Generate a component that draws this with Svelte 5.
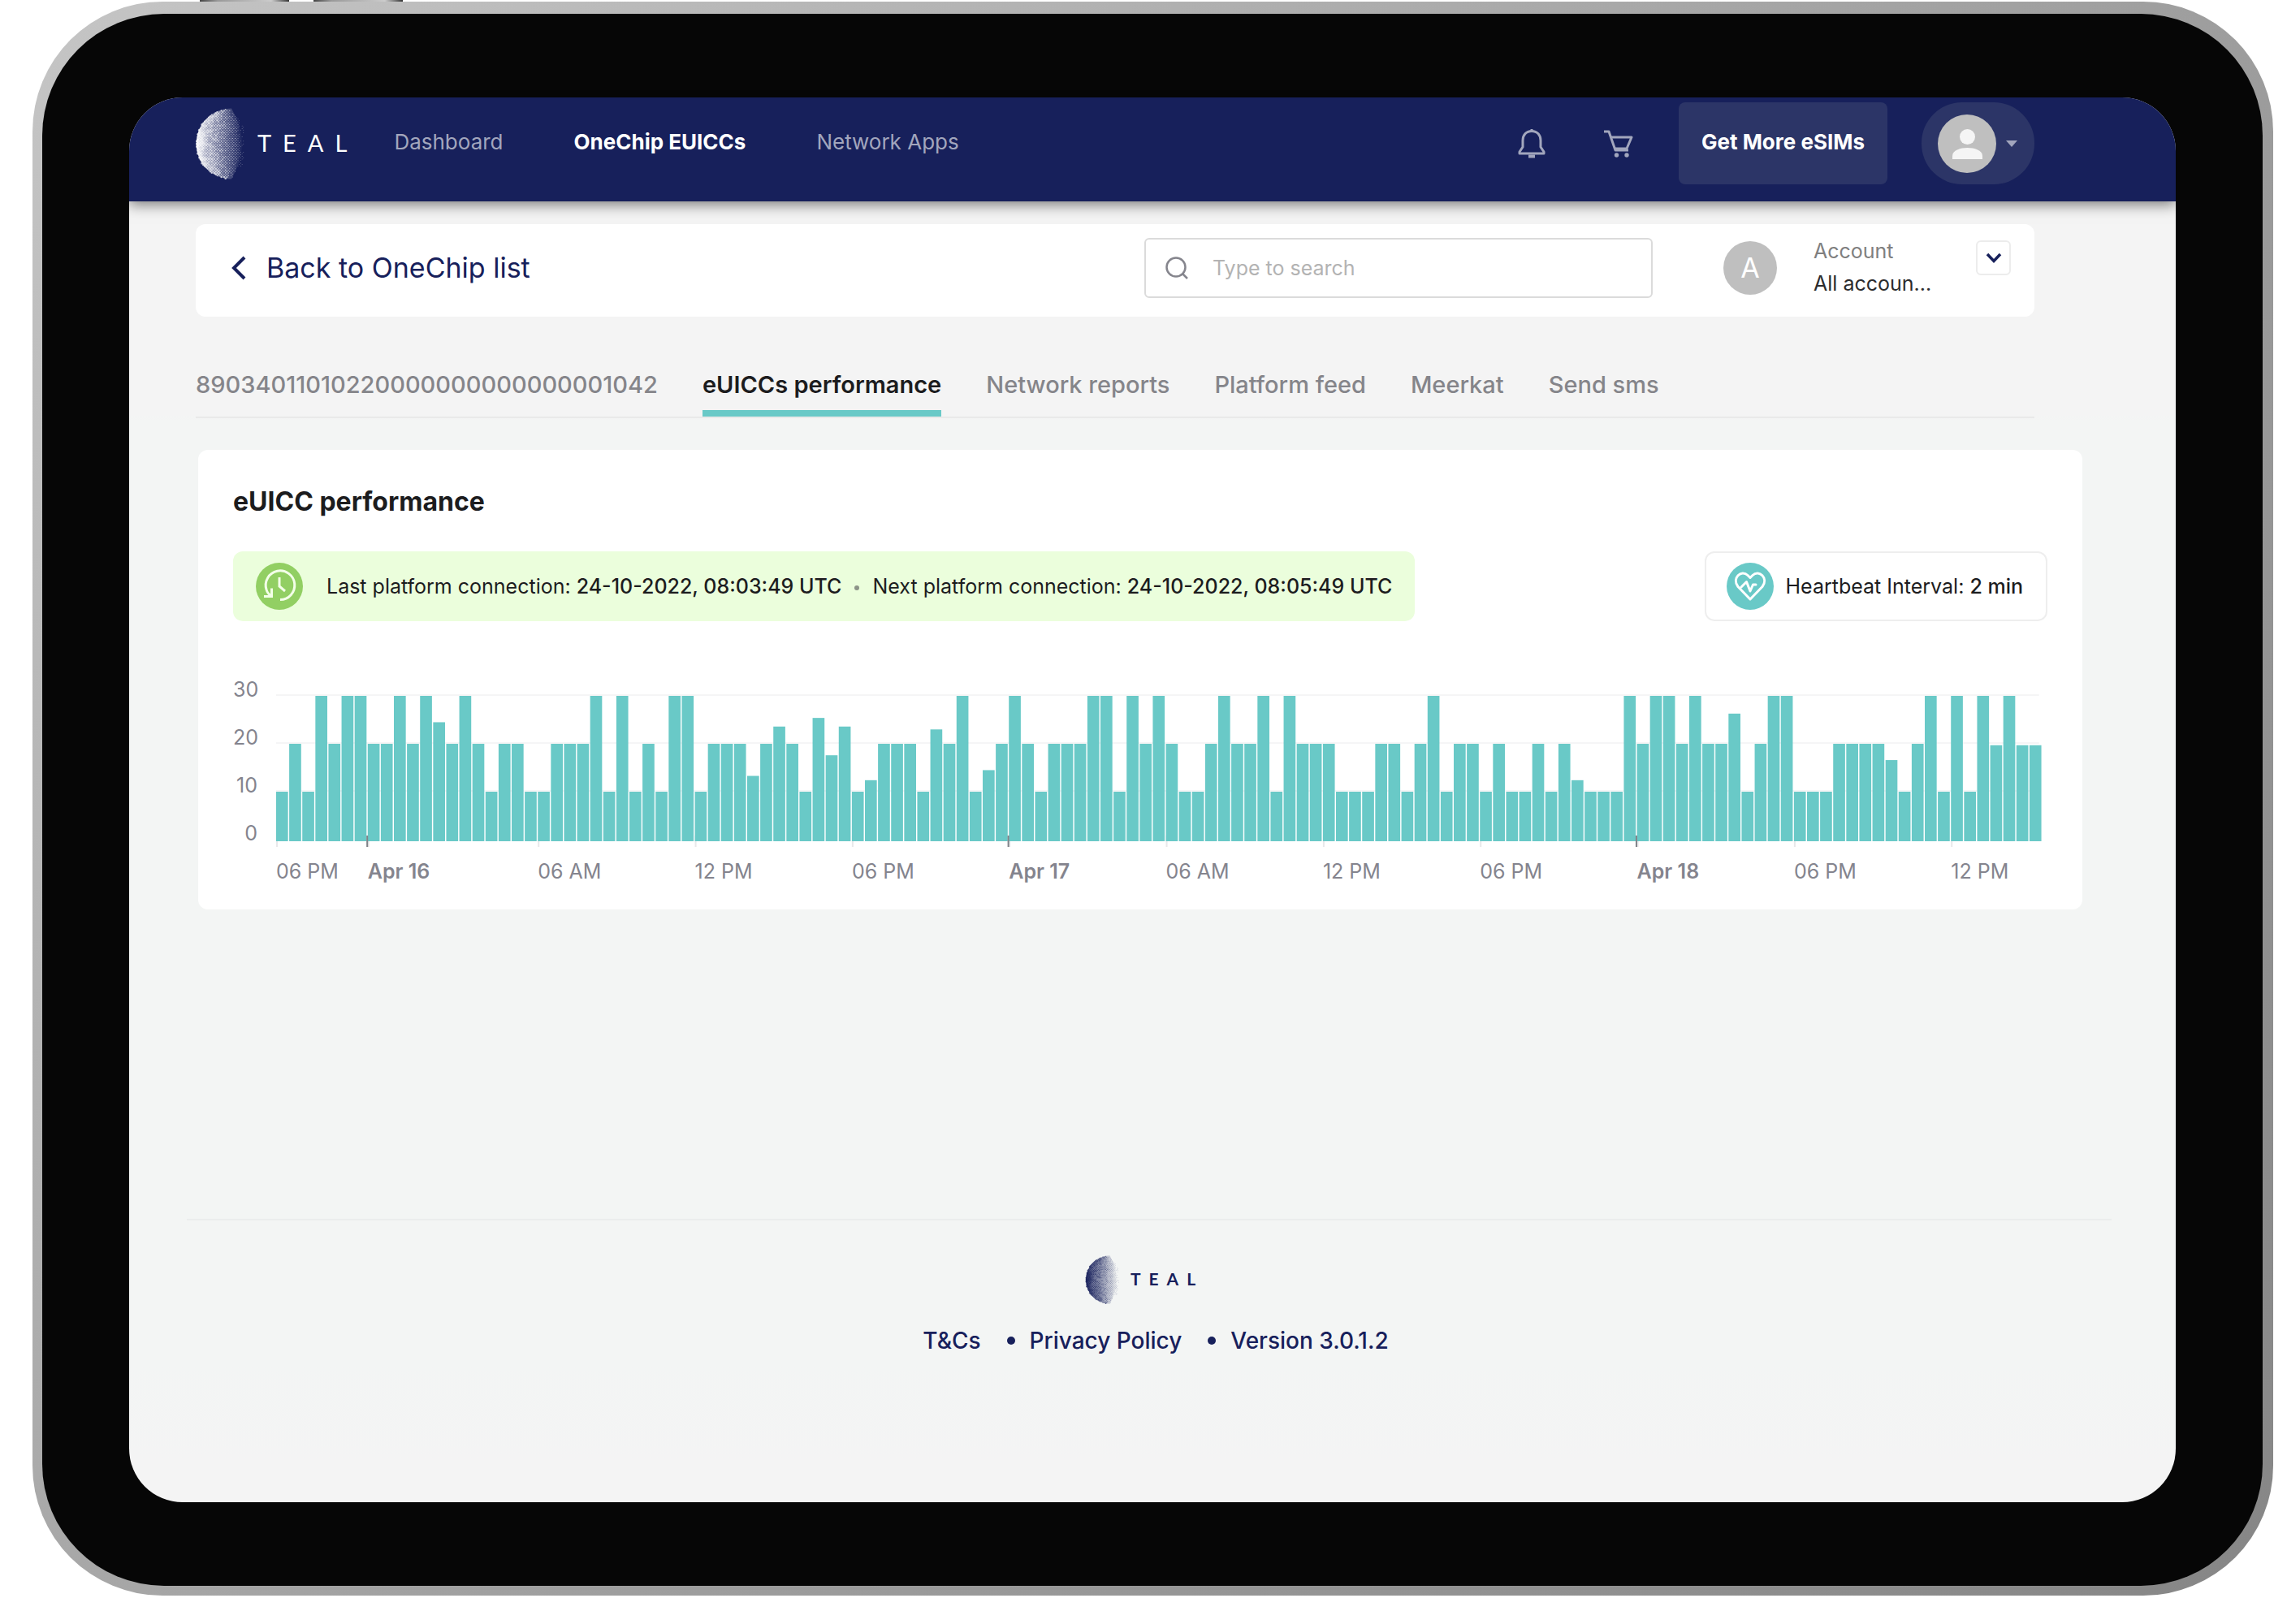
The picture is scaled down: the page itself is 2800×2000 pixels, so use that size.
<script lang="ts">
    const navLinks = [
        { label: "Dashboard", active: false },
        { label: "OneChip EUICCs", active: true },
        { label: "Network Apps", active: false },
    ];

    const tabs = [
        "89034011010220000000000000001042",
        "eUICCs performance",
        "Network reports",
        "Platform feed",
        "Meerkat",
        "Send sms",
    ];
    let activeTab = "eUICCs performance";

    let search = "";

    // Chart data
    const bars = [
        10, 20, 10, 30, 20, 30, 30, 20, 20, 30, 20, 30, 24.5, 20, 30, 20, 10,
        20, 20, 10, 10, 20, 20, 20, 30, 10, 30, 10, 20, 10, 30, 30, 10, 20, 20,
        20, 13.3, 20, 23.6, 20, 10, 25.4, 17.6, 23.6, 10, 12.4, 20, 20, 20, 10,
        23, 20, 30, 10, 14.5, 20, 30, 20, 10, 20, 20, 20, 30, 30, 10, 30, 20,
        30, 20, 10, 10, 20, 30, 20, 20, 30, 10, 30, 20, 20, 20, 10, 10, 10, 20,
        20, 10, 20, 30, 10, 20, 20, 10, 20, 10, 10, 20, 10, 20, 12.4, 10, 10,
        10, 30, 20, 30, 30, 20, 30, 20, 20, 26.3, 10, 20, 30, 30, 10, 10, 10,
        20, 20, 20, 20, 16.6, 10, 20, 30, 10, 30, 10, 30, 19.7, 30, 19.7, 19.7,
    ];

    const ticks = [
        { at: 0, label: "06 PM" },
        { at: 7, label: "Apr 16", day: true },
        { at: 20, label: "06 AM" },
        { at: 32, label: "12 PM" },
        { at: 44, label: "06 PM" },
        { at: 56, label: "Apr 17", day: true },
        { at: 68, label: "06 AM" },
        { at: 80, label: "12 PM" },
        { at: 92, label: "06 PM" },
        { at: 104, label: "Apr 18", day: true },
        { at: 116, label: "06 PM" },
        { at: 128, label: "12 PM" },
    ];

    const yLabels = [30, 20, 10, 0];
    const base = 216;

    function barHeight(value: number) {
        return 2 + value * 5.9;
    }

    function pct(index: number) {
        return (index / bars.length) * 100 + "%";
    }

    // Halftone globe of the logo: dots shrink away from the left rim
    function makeDots() {
        const dots: { x: number; y: number; r: number }[] = [];
        const step = 1.7;
        let seed = 7;
        for (let row = 0; row < 53; row++) {
            for (let col = 0; col < 19; col++) {
                seed = (seed * 1103515245 + 12345) % 2147483648;
                const noise = seed / 2147483648;
                const x = 1 + col * step * 2 + (row % 2) * step;
                const y = row * step;
                const dx = x - 44;
                const dy = y - 44;
                if (dx * dx + dy * dy > 43.5 * 43.5) continue;
                const rim = 44 - Math.sqrt(43.5 * 43.5 - dy * dy);
                const edge = 62 - Math.pow(Math.abs(dy) / 43.5, 3) * 17;
                if (x > edge - noise * 10) continue;
                const t = (x - rim) / (edge - rim);
                const r = 1.3 * Math.pow(1 - t, 1.1) * (0.4 + noise * 0.7) + 0.35;
                dots.push({ x, y, r: Math.round(r * 100) / 100 });
            }
        }
        return dots;
    }
    const dots = makeDots();
</script>

{#snippet brand(small)}
    <a class="brand" class:small href="#home" aria-label="Teal home">
        <svg class="globe" viewBox="0 0 60 88" fill="currentColor" aria-hidden="true">
            <mask id="globe-fade">
                <linearGradient id="globe-ramp">
                    <stop offset="0" stop-color="#fff" />
                    <stop offset="0.25" stop-color="#888" />
                    <stop offset="0.7" stop-color="#333" />
                    <stop offset="1" stop-color="#000" />
                </linearGradient>
                <rect width="60" height="88" fill="url(#globe-ramp)" />
            </mask>
            <path
                d="M44 .5A43.5 43.5 0 0 0 44 87.500C50 76 57 62 57 44C57 26 50 12 44 .5Z"
                mask="url(#globe-fade)"
            />
            <g opacity="0.7">
                {#each dots as dot}
                    <circle cx={dot.x} cy={dot.y} r={dot.r} />
                {/each}
            </g>
        </svg>
        <span class="wordmark">TEAL</span>
    </a>
{/snippet}

<div class="stage">
    <div class="side-button first"></div>
    <div class="side-button second"></div>
    <div class="tablet">
        <div class="bezel">
            <div class="screen">
                <header class="topbar">
                    {@render brand(false)}
                    <nav class="main-nav">
                        {#each navLinks as link}
                            <a href="#nav" class:active={link.active}>{link.label}</a>
                        {/each}
                    </nav>
                    <div class="icons">
                        <button class="icon-btn" aria-label="Notifications">
                            <svg width="36" height="38" viewBox="0 0 36 38" fill="none" stroke="currentColor" stroke-width="3" stroke-linejoin="round">
                                <path d="M18 3.500C11 3.500 7 8.500 7 15V23L3 29V31H33V29L29 23V15C29 8.500 25 3.500 18 3.500Z" />
                                <path d="M18 1V4" />
                                <path d="M14 34.500H22" stroke-width="4" />
                            </svg>
                        </button>
                        <button class="icon-btn" aria-label="Cart">
                            <svg width="36" height="36" viewBox="0 0 36 36" fill="none" stroke="currentColor" stroke-width="3" stroke-linejoin="round">
                                <path d="M0 3H6L14 26H30" />
                                <path d="M8 10H34L28 24H13" />
                                <circle cx="15.500" cy="32" r="2.700" fill="currentColor" stroke="none" />
                                <circle cx="28" cy="32" r="2.700" fill="currentColor" stroke="none" />
                            </svg>
                        </button>
                    </div>
                    <button class="cta">Get More eSIMs</button>
                    <button class="profile" aria-label="Profile menu">
                        <svg width="72" height="72" viewBox="0 0 72 72">
                            <circle cx="36" cy="36" r="36" fill="#bfbfbf" />
                            <circle cx="36.500" cy="27.500" r="9.500" fill="#f5f5f5" />
                            <path d="M18 55V51C18 44 28 41 36.500 41S55 44 55 51V55Z" fill="#f5f5f5" />
                        </svg>
                        <svg width="14" height="8" viewBox="0 0 14 8">
                            <path d="M0 0H14L7 8Z" fill="#a2a6bd" />
                        </svg>
                    </button>
                </header>

                <main>
                    <div class="toolbar">
                        <a class="back" href="#list">
                            <svg width="18" height="30" viewBox="0 0 18 30" fill="none" stroke="currentColor" stroke-width="4">
                                <path d="M16 2L3 15L16 28" />
                            </svg>
                            Back to OneChip list
                        </a>
                        <div class="search">
                            <svg width="28" height="28" viewBox="0 0 28 28" fill="none" stroke="#85858d" stroke-width="2.500">
                                <circle cx="13" cy="13" r="11.500" />
                                <path d="M21 21L27 27" />
                            </svg>
                            <input
                                type="text"
                                aria-label="Search"
                                placeholder="Type to search"
                                bind:value={search}
                            />
                        </div>
                        <div class="account">
                            <span class="initial">A</span>
                            <div class="account-text">
                                <label for="account">Account</label>
                                <select id="account">
                                    <option>All accoun...</option>
                                </select>
                            </div>
                            <button class="expand" aria-label="Open account list">
                                <svg width="20" height="14" viewBox="0 0 20 14" fill="none" stroke="#17205b" stroke-width="3.500">
                                    <path d="M2 2L10 10.500L18 2" />
                                </svg>
                            </button>
                        </div>
                    </div>

                    <nav class="tabs">
                        {#each tabs as tab}
                            <a
                                href="#tab"
                                class:active={tab === activeTab}
                                on:click|preventDefault={() => (activeTab = tab)}
                            >{tab}</a>
                        {/each}
                    </nav>

                    <section class="panel">
                        <h1>eUICC performance</h1>
                        <div class="status-row">
                            <div class="connection">
                                <svg width="58" height="58" viewBox="0 0 58 58" fill="none" stroke="#f3ffe8" stroke-width="3">
                                    <circle cx="29" cy="29" r="29" fill="#92cf63" stroke="none" />
                                    <path d="M30 45.500A17.800 17.800 0 1 0 13 33C14 37 16 39 19 41" />
                                    <path d="M10 41.500H19.500V31.500" />
                                    <path d="M29 18V29L36 35" />
                                </svg>
                                <p>
                                    Last platform connection: <b>24-10-2022, 08:03:49 UTC</b>
                                    <span class="dot"></span>
                                    Next platform connection: <b>24-10-2022, 08:05:49 UTC</b>
                                </p>
                            </div>
                            <div class="heartbeat">
                                <svg width="58" height="58" viewBox="0 0 58 58" fill="none" stroke="#fff" stroke-width="3" stroke-linejoin="round" stroke-linecap="round">
                                    <circle cx="29" cy="29" r="29" fill="#69c9c7" stroke="none" />
                                    <path d="M29 45L14 29.500C6 19 18 8 26 15.500L29 18.500L32 15.500C40 8 52 19 44 29.500Z" />
                                    <path d="M18 30L24.500 23.500L29 35L32.500 27H36" />
                                </svg>
                                <p>Heartbeat Interval: <b>2 min</b></p>
                            </div>
                        </div>

                        <div class="chart">
                            <div class="y-axis">
                                {#each yLabels as value}
                                    <span>{value}</span>
                                {/each}
                            </div>
                            <svg class="plot" width="100%" height="236" role="img" aria-label="Platform connections over time">
                                {#each [35, 94, 153] as y}
                                    <rect x="0" {y} width="99.8%" height="2" fill="#f5f5f6" />
                                {/each}
                                {#each ticks as tick}
                                    <rect x={pct(tick.at)} y="209" width="2" height="14" fill="#e8e8ea" />
                                {/each}
                                {#each bars as value, i}
                                    <rect
                                        x={pct(i)}
                                        y={base - barHeight(value)}
                                        width={pct(0.91)}
                                        height={barHeight(value)}
                                        fill="#69c9c7"
                                    />
                                {/each}
                                {#each ticks.filter((t) => t.day) as tick}
                                    <rect x={pct(tick.at - 0.1)} y="209" width="2" height="14" fill="#808389" />
                                {/each}
                            </svg>
                            <div class="x-axis" style="grid-template-columns: repeat({bars.length}, minmax(0, 1fr))">
                                {#each ticks as tick}
                                    <span class:day={tick.day} style="grid-column: {tick.at + 1}">{tick.label}</span>
                                {/each}
                            </div>
                        </div>
                    </section>
                </main>

                <footer>
                    {@render brand(true)}
                    <ul>
                        <li><a href="#terms">T&amp;Cs</a></li>
                        <li><a href="#privacy">Privacy Policy</a></li>
                        <li>Version 3.0.1.2</li>
                    </ul>
                </footer>
            </div>
        </div>
    </div>
</div>

<style>
    :global(body) {
        background: #fff;
    }

    .stage,
    .stage * {
        box-sizing: border-box;
    }

    .stage {
        position: relative;
        display: flex;
        min-height: 100vh;
        padding: 2px 1px 35px 40px;
        font-family: Inter, "Liberation Sans", sans-serif;
        font-size: 26px;
        line-height: 36px;
        color: #1c1c1e;
    }

    button,
    input,
    select {
        font: inherit;
        color: inherit;
        border: none;
        padding: 0;
        background: none;
    }

    button {
        cursor: pointer;
    }

    a {
        color: inherit;
        text-decoration: none;
    }

    svg {
        display: block;
        flex-shrink: 0;
    }

    /* Tablet frame */
    .side-button {
        position: absolute;
        top: 0;
        width: 110px;
        height: 2px;
        background: linear-gradient(90deg, #444, #999 20%, #ccc 80%, #333);
    }

    .side-button.first {
        left: 246px;
    }

    .side-button.second {
        left: 386px;
    }

    .tablet {
        flex: 1;
        display: flex;
        padding: 15px 13px 12px 12px;
        border-radius: 160px;
        background: linear-gradient(135deg, #c5c5c5, #a2a2a2 50%, #868686);
    }

    .bezel {
        flex: 1;
        display: flex;
        padding: 103px 107px;
        border-radius: 150px;
        background: #060606;
    }

    .screen {
        flex: 1;
        min-width: 0;
        display: flex;
        flex-direction: column;
        border-radius: 66px;
        overflow: hidden;
        background: linear-gradient(#f4f4f4 390px, #f3f5f4 400px, #f3f5f4 1560px, #f4f4f4 1680px);
    }

    /* Top bar */
    .topbar {
        position: relative;
        display: flex;
        align-items: center;
        padding: 6px 174px 21px 82px;
        background: #17205b;
        color: #fff;
        box-shadow: 0 4px 16px rgba(0, 0, 0, 0.5);
    }

    .brand {
        display: flex;
        align-items: center;
        gap: 16px;
        padding-right: 12px;
    }

    .globe {
        width: 60px;
        height: 88px;
    }

    .wordmark {
        padding-bottom: 2px;
        font-family: Lato, sans-serif;
        font-size: 29px;
        letter-spacing: 14px;
    }

    .brand.small {
        color: #17205b;
        gap: 14px;
    }

    .small .globe {
        width: 42px;
        height: 60px;
    }

    .small .wordmark {
        font-size: 21px;
        font-weight: 700;
        letter-spacing: 10px;
    }

    .main-nav {
        display: flex;
        gap: 87px;
        margin-left: 32px;
        margin-right: auto;
        padding-bottom: 4px;
        color: #a2a6bd;
    }

    .main-nav a.active {
        color: #fff;
        font-weight: 700;
    }

    .icons {
        display: flex;
        align-items: center;
        gap: 71px;
        margin-right: 56px;
        color: #a2a6bd;
    }

    .cta {
        height: 101px;
        padding: 0 28px 4px;
        border-radius: 8px;
        background: #2c3567;
        font-weight: 700;
        color: #fff;
    }

    .profile {
        display: flex;
        align-items: center;
        gap: 12px;
        height: 101px;
        margin-left: 42px;
        padding: 0 21px 0 20px;
        border-radius: 50px;
        background: #2c3567;
    }

    main {
        padding: 28px 115px 0 82px;
    }

    /* Toolbar */
    .toolbar {
        display: flex;
        align-items: center;
        margin-right: 59px;
        padding: 17px 29px 23px 44px;
        border-radius: 12px;
        background: #fff;
        font-size: 25px;
    }

    .back {
        display: flex;
        align-items: center;
        gap: 25px;
        margin-right: auto;
        font-size: 34px;
        color: #17205b;
    }

    .search {
        display: flex;
        align-items: center;
        gap: 30px;
        width: 626px;
        height: 74px;
        padding: 0 24px;
        border: 2px solid #dbdbdb;
        border-radius: 6px;
    }

    .search input {
        flex: 1;
        min-width: 0;
        outline: none;
    }

    .search input::placeholder {
        color: #b3b3b3;
        opacity: 1;
    }

    .account {
        display: flex;
        align-items: center;
        margin-left: 87px;
    }

    .initial {
        display: grid;
        place-items: center;
        width: 66px;
        height: 66px;
        margin-right: 45px;
        border-radius: 50%;
        background: #bfbfbf;
        color: #fff;
        font-size: 34px;
    }

    .account-text {
        display: flex;
        flex-direction: column;
        gap: 8px;
        width: 200px;
        padding-bottom: 2px;
        line-height: 32px;
        color: #2c2c2e;
    }

    .account-text label {
        color: #808080;
    }

    select {
        appearance: none;
        width: 160px;
        height: 32px;
    }

    .expand {
        display: grid;
        place-items: center;
        align-self: flex-start;
        width: 43px;
        height: 43px;
        margin-top: 3px;
        border: 2px solid #ececec;
        border-radius: 6px;
    }

    /* Tabs */
    .tabs {
        display: flex;
        gap: 55px;
        margin: 66px 59px 0 0;
        border-bottom: 2px solid #e9e9e9;
        font-size: 29px;
        font-weight: 500;
        color: #85858a;
    }

    .tabs a {
        padding-bottom: 13px;
        border-bottom: 8px solid transparent;
    }

    .tabs a.active {
        border-color: #69c9c7;
        color: #1c1c1e;
        font-weight: 600;
    }

    /* Performance panel */
    .panel {
        margin: 39px 0 0 3px;
        padding: 44px 43px 29px;
        border-radius: 12px;
        background: #fff;
    }

    h1 {
        margin: 0 0 41px;
        font-size: 32px;
        line-height: 40px;
        font-weight: 700;
    }

    .status-row {
        display: flex;
        justify-content: space-between;
        font-size: 25px;
    }

    .status-row p {
        margin: 0;
    }

    .status-row b {
        font-weight: 500;
    }

    .connection,
    .heartbeat {
        display: flex;
        align-items: center;
        height: 86px;
        border-radius: 12px;
    }

    .connection {
        gap: 29px;
        padding: 0 28px;
        background: #ebfedc;
    }

    .connection .dot {
        display: inline-block;
        width: 6px;
        height: 6px;
        margin: 0 9px;
        border-radius: 50%;
        background: #8c9488;
        vertical-align: middle;
    }

    .heartbeat {
        gap: 15px;
        padding: 0 28px 0 25px;
        border: 2px solid #eeeeee;
    }

    /* Chart */
    .chart {
        display: grid;
        grid-template-columns: 30px minmax(0, 1fr);
        column-gap: 23px;
        margin: 55px 6px 0 0;
        font-size: 25px;
        color: #84848e;
    }

    .y-axis {
        display: flex;
        flex-direction: column;
        text-align: right;
        line-height: 59px;
    }

    .x-axis {
        grid-column: 2;
        display: grid;
        line-height: 35px;
    }

    .x-axis span {
        grid-row: 1;
        white-space: nowrap;
    }

    .x-axis .day {
        font-weight: 600;
    }

    /* Footer */
    footer {
        display: flex;
        flex-direction: column;
        align-items: center;
        gap: 27px;
        margin: auto 79px 0 71px;
        padding: 43px 0 181px;
        border-top: 2px solid #ebeded;
        color: #17205b;
    }

    footer ul {
        display: flex;
        gap: 32px;
        margin: 0;
        padding: 0 0 0 16px;
        list-style: none;
        font-size: 28px;
        font-weight: 500;
    }

    footer li {
        display: flex;
        align-items: center;
        gap: 18px;
    }

    footer li + li::before {
        content: "";
        width: 10px;
        height: 10px;
        border-radius: 50%;
        background: currentColor;
    }
</style>
